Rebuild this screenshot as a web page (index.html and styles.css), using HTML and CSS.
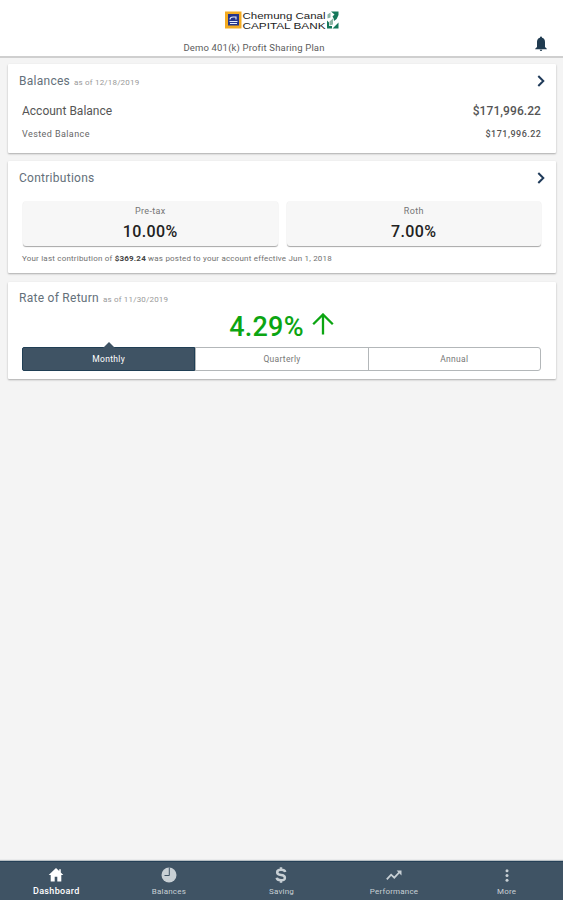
FILE: index.html
```html
<!DOCTYPE html>
<html lang="en">
<head>
<meta charset="utf-8">
<title>Demo 401(k) Profit Sharing Plan</title>
<link rel="stylesheet" href="styles.css">
</head>
<body>
<header class="header">
  <svg class="logo" width="116" height="20" viewBox="0 0 116 20">
    <rect x="1" y="1.500" width="16.500" height="17" fill="#f3ab22"/>
    <rect x="4" y="4" width="11" height="11.500" fill="#24358c"/>
    <path d="M6 9.500q0-2.500 3-2.500h3v2.500M5.500 11.500h8M6 13.500h7" stroke="#e8edfb" stroke-width="1.100" fill="none"/>
    <text x="18.500" y="8.500" textLength="83" lengthAdjust="spacingAndGlyphs">Chemung Canal</text>
    <text x="18.500" y="18.500" textLength="83" lengthAdjust="spacingAndGlyphs">CAPITAL BANK</text>
    <path d="M107 1.500h7.500v3.500q-1 4-4.500 6 0-3-1.500-4.500l2-2zM103 10.500l2 2v3.500h3v2.500h-5zM114.500 12.500v6h-6z" fill="#16785a"/>
    <path d="M103.500 4.500l3-2v5l-3 1zM105.500 11.500l3.500-3v6l-3.500 1z" fill="#8db5a5"/>
  </svg>
  <div class="plan">Demo 401(k) Profit Sharing Plan</div>
  <svg class="bell" width="12" height="16" viewBox="0 0 12 16"><path d="M6 .5q1 0 1.100 1.200Q10 2.600 10 6v5l1.800 1.700v.5H.2v-.5L2 11V6q0-3.400 2.900-4.300Q5 .5 6 .5zM4.700 13.700h2.600Q7 15 6 15t-1.300-1.300z"/></svg>
</header>
<main>
  <section class="card balances">
    <div class="head"><h2>Balances</h2><small>as of 12/18/2019</small><svg class="chev" width="8" height="12" viewBox="0 0 8 12"><path d="M1.300 1l5 5-5 5"/></svg></div>
    <div class="row account"><span>Account Balance</span><b>$171,996.22</b></div>
    <div class="row vested"><span>Vested Balance</span><b>$171,996.22</b></div>
  </section>
  <section class="card contributions">
    <div class="head"><h2>Contributions</h2><svg class="chev" width="8" height="12" viewBox="0 0 8 12"><path d="M1.300 1l5 5-5 5"/></svg></div>
    <div class="tiles">
      <div class="tile"><span>Pre-tax</span><b>10.00%</b></div>
      <div class="tile"><span>Roth</span><b>7.00%</b></div>
    </div>
    <p class="note">Your last contribution of <b>$369.24</b> was posted to your account effective Jun 1, 2018</p>
  </section>
  <section class="card return">
    <div class="head"><h2>Rate of Return</h2><small>as of 11/30/2019</small></div>
    <div class="rate"><span>4.29%</span><svg width="22" height="22" viewBox="0 0 22 22"><path d="M11 21.500V1.800M1.200 11.200L11 1.500l9.800 9.700"/></svg></div>
    <div class="segments"><span class="on">Monthly</span><span>Quarterly</span><span>Annual</span></div>
  </section>
</main>
<nav class="tabs">
  <a class="active"><svg viewBox="0 0 16 16"><path d="M8 1L.7 8h2v6.500h4V9.800h2.600v4.700h4V8h2l-2.500-2.400V2.300h-1.600V4z"/></svg><span>Dashboard</span></a>
  <a><svg viewBox="0 0 16 16"><circle cx="8" cy="8" r="7.500"/><path class="cut" d="M8.300.5v8H3.500"/></svg><span>Balances</span></a>
  <a><svg viewBox="0 0 16 16"><path class="line dollar" d="M12.200 5.100Q11.700 2.800 8 2.800q-3.800 0-3.800 2.500T8 8t3.900 2.800T8 13.200q-3.900 0-4.300-2.500M8 .3v2.500M8 13.200v2.500"/></svg><span>Saving</span></a>
  <a><svg viewBox="0 0 16 16"><path class="line" d="M.8 12.300l4.300-4.600 3.200 3 5.800-6.200"/><path d="M10.600 3.500h4.900v4.900z"/></svg><span>Performance</span></a>
  <a><svg viewBox="0 0 16 16"><circle cx="8" cy="3.700" r="1.500"/><circle cx="8" cy="8.500" r="1.500"/><circle cx="8" cy="13.300" r="1.500"/></svg><span>More</span></a>
</nav>
</body>
</html>
```
FILE: styles.css
```css
* { box-sizing: border-box; }
body { margin: 0; height: 900px; display: flex; flex-direction: column; background: #f4f4f4; color: #555; font-family: Roboto, sans-serif; overflow: hidden; }
.header { position: relative; height: 58px; flex: none; background: #fff; border-bottom: 2px solid #cfcfcf; display: flex; flex-direction: column; align-items: center; padding-top: 10px; }
.logo { display: block; }
.logo text { font: 8.500px "Liberation Sans", sans-serif; fill: #222; }
.plan { margin: 12px 55px 0 0; font-size: 9.500px; line-height: 12px; letter-spacing: .17px; white-space: nowrap; color: #5c5c5c; }
.bell { position: absolute; right: 16px; top: 36px; fill: #203b50; }
main { flex: 1; padding: 6px 7px 0 8px; }
.card { background: #fff; box-shadow: 0 1px 2px rgba(0,0,0,.3); border-radius: 1px; padding: 0 15px 0 14px; }
.balances { height: 89px; margin-bottom: 8px; }
.contributions { height: 112px; margin-bottom: 9px; }
.return { height: 97px; }
.head { display: flex; align-items: baseline; height: 34px; margin-left: -3px; padding-top: 9px; }
.return .head { padding-top: 8px; }
h2 { margin: 0; font-size: 12px; line-height: 16px; font-weight: 400; letter-spacing: .27px; color: #64707a; }
small { font-size: 8px; color: #999; margin-left: 4px; letter-spacing: .18px; }
.chev { align-self: flex-start; margin: 2px -4px 0 auto; }
.chev path { fill: none; stroke: #203b5a; stroke-width: 2; }
.row { display: flex; justify-content: space-between; align-items: center; }
.row b { font-weight: 500; }
.account { height: 26px; font-size: 12px; }
.account b { letter-spacing: .08px; }
.vested { height: 20px; font-size: 9px; letter-spacing: .42px; color: #666; }
.vested b { color: #555; letter-spacing: .5px; margin-right: -.5px; }
.tiles { display: flex; gap: 9px; margin: 6px 0 0 1px; }
.tile { flex: 1; height: 45px; background: #f7f7f7; border-radius: 3px; box-shadow: 0 1px 1px rgba(0,0,0,.35); display: flex; flex-direction: column; align-items: center; }
.tile span { font-size: 9px; line-height: 12px; margin-top: 4px; color: #757575; letter-spacing: .3px; }
.tile b { font-size: 16px; line-height: 20px; margin-top: 5px; font-weight: 500; color: #222; letter-spacing: .4px; }
.note { margin: 7px 0 0; font-size: 8px; line-height: 12px; letter-spacing: .2px; white-space: nowrap; color: #707070; }
.note b { color: #444; }
.rate { display: flex; height: 32px; align-items: center; justify-content: center; gap: 8px; color: #0ca512; font-size: 27px; font-weight: 500; line-height: 32px; letter-spacing: .25px; margin-top: -5px; }
.rate svg { margin-top: -6px; fill: none; stroke: currentColor; stroke-width: 2.300; }
.segments { display: flex; height: 24px; margin-top: 4px; border: 1px solid #b3b7b9; border-radius: 3px; }
.segments span { flex: 1; display: flex; align-items: center; justify-content: center; font-size: 8.500px; letter-spacing: .3px; color: #777; }
.segments span + span { border-left: 1px solid #b3b7b9; }
.segments .on { position: relative; background: #3f5364; color: #fff; margin: -1px 0 -1px -1px; border: 1px solid #203f55; border-radius: 2px 0 0 2px; }
.on::before { content: ""; position: absolute; top: -6px; left: 50%; margin-left: -6px; border: 6px solid transparent; border-top: 0; border-bottom-color: #3f5364; }
.tabs { height: 39px; flex: none; display: flex; background: #3f5364; border-top: 1px solid #254057; box-shadow: 0 -1px 1px #b8bfc3; }
.tabs a { flex: 1; display: flex; flex-direction: column; align-items: center; color: #c8d0d5; }
.tabs svg { width: 16px; height: 16px; margin-top: 5px; fill: currentColor; }
.tabs span { font-size: 8px; line-height: 10px; margin-top: 4px; letter-spacing: .2px; }
.tabs .active { color: #fff; }
.tabs .active span { font-size: 9px; font-weight: 500; letter-spacing: .35px; margin-top: 3px; }
.line { fill: none; stroke: currentColor; stroke-width: 1.800; }
.dollar { stroke-width: 2.500; }
.cut { fill: none; stroke: #3f5364; stroke-width: 1; }
```
